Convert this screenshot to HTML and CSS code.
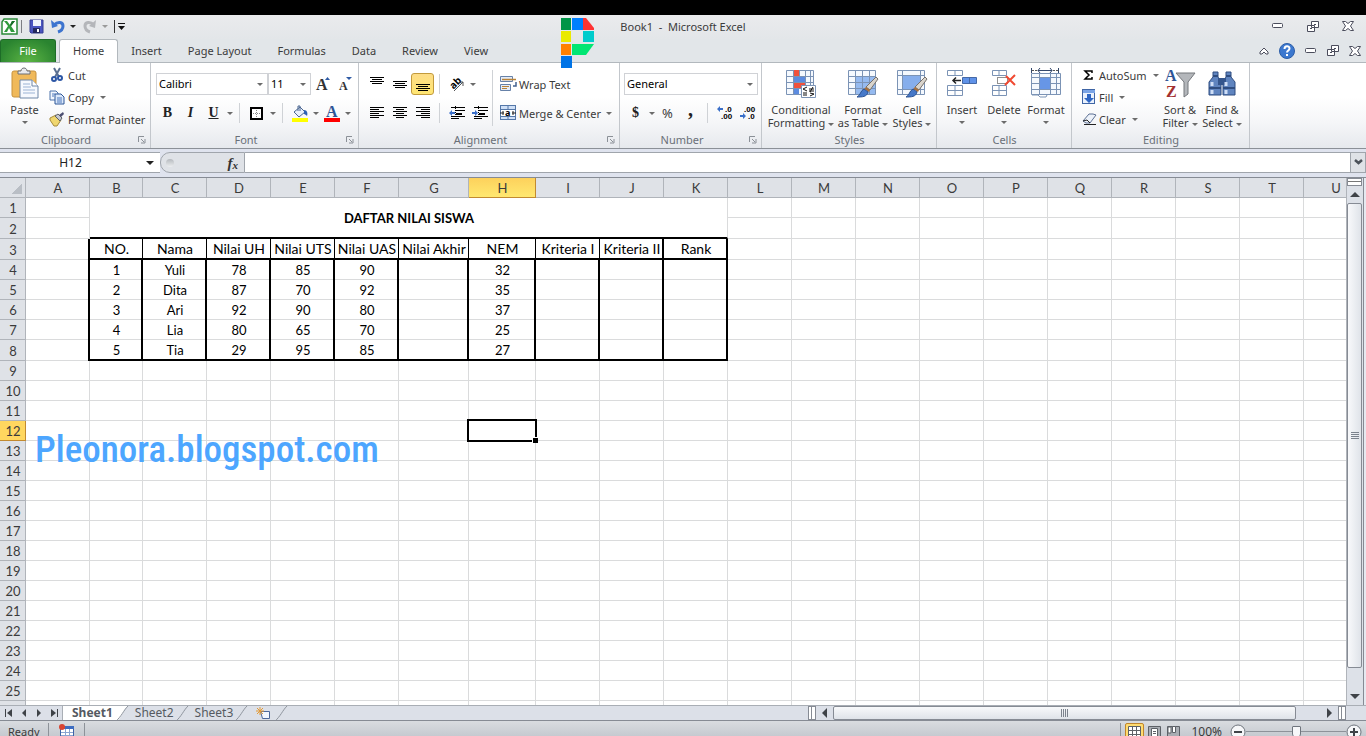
FILE: index.html
```html
<!DOCTYPE html>
<html lang="en">
<head>
    <meta charset="UTF-8">
    <meta name="viewport" content="width=device-width, initial-scale=1.0">
    <title>Book1 - Microsoft Excel</title>
    <link rel="stylesheet" href="styles.css">
</head>
<body>
    <div class="app">
        <header class="titlebar">
            <div class="quick">
                <svg width="17" height="17" viewBox="0 0 17 17"><path d="M3 1h13v15H1V4z" fill="#fff" stroke="#2b8a3a" stroke-width="1.5"/><path d="M3 3h3l3 4 2-4h3l-4 5 4 6h-4l-2-4-2 4H3l4-6z" fill="#2f9a3c"/><path d="M9 7l2-4h3l-4 5z" fill="#176b28"/></svg>
                <span class="bar"></span>
                <button class="qbtn" aria-label="Save"><svg width="15" height="15" viewBox="0 0 15 15"><path d="M1 1h13v13H2l-1-1z" fill="#4a55c0" stroke="#343c93"/><path d="M4 1h8v6H4z" fill="#eef2fb"/><path d="M4 9h7v5H4z" fill="#23295f"/><path d="M8 10h2v3H8z" fill="#fff"/></svg></button>
                <button class="qbtn" aria-label="Undo"><svg width="14" height="15" viewBox="0 0 14 15"><path d="M3 6c4-4 9-3 9 1 0 3-2 5-5 6" fill="none" stroke="#3d74cf" stroke-width="3"/><path d="M0 1l1 8 6-2z" fill="#3d74cf"/></svg></button>
                <span class="caret black"></span>
                <button class="qbtn" aria-label="Redo"><svg width="14" height="15" viewBox="0 0 14 15"><path d="M11 6C7 2 2 3 2 7c0 3 2 5 5 6" fill="none" stroke="#b4b6ba" stroke-width="3"/><path d="M13 1l-1 8-6-2z" fill="#b4b6ba"/></svg></button>
                <span class="caret pale"></span>
                <span class="bar dark"></span>
                <button class="qbtn custom" aria-label="Customize"><svg width="7" height="7" viewBox="0 0 7 7"><path d="M0 0h7v1H0zM0 3h7L3.500 7z" fill="#111"/></svg></button>
            </div>
            <h1>Book1 &nbsp;-&nbsp; Microsoft Excel</h1>
            <div class="winctl top">
                <button aria-label="Minimize"><svg width="12" height="6"><rect x=".5" y=".5" width="10" height="4" rx="1" fill="#fff" stroke="#4b4d5c"/></svg></button>
                <button aria-label="Restore"><svg width="12" height="11"><path d="M4.500.5h7v6h-7zM.5 4.500h7v6h-7z" fill="#fff" stroke="#4b4d5c"/><path d="M3 7h2v1H3zM7 3h2v1H7z" fill="#4b4d5c"/></svg></button>
                <button aria-label="Close"><svg width="12" height="10"><path d="M.5.5h3l2.500 2 2.500-2h3L8.500 5l3 4.500h-3L6 7.500l-2.500 2h-3l3-4.500z" fill="#fff" stroke="#4b4d5c"/></svg></button>
            </div>
            <svg class="logo" width="34" height="51" viewBox="0 0 34 51"><path d="M0 0h10v12H0z" fill="#009548"/><path d="M11 0h11v12H11z" fill="#0080ff"/><path d="M22 0h3l8 10v2H22z" fill="#ff3333"/><path d="M0 13h10v11H0z" fill="#eaea00"/><path d="M22 13h11v11H22z" fill="#00cccc"/><path d="M0 26h10v11H0z" fill="#ff8000"/><path d="M11 26h22l-8 11H11z" fill="#00e673"/><path d="M0 38h11v12H0z" fill="#0073e6"/></svg>
        </header>

        <nav class="tabs">
            <a href="#" class="file">File</a>
            <a href="#" class="active">Home</a>
            <a href="#">Insert</a>
            <a href="#">Page Layout</a>
            <a href="#">Formulas</a>
            <a href="#">Data</a>
            <a href="#">Review</a>
            <a href="#">View</a>
            <div class="winctl">
                <button aria-label="Collapse ribbon"><svg width="10" height="8"><path d="M5 1l4 4v2H7L5 5 3 7H1V5z" fill="#fff" stroke="#4b4d5c"/></svg></button>
                <button aria-label="Help"><svg width="16" height="16"><circle cx="8" cy="8" r="7.500" fill="#3c78cf" stroke="#2c5ea8"/><path d="M5.500 6c0-3.500 5-3.500 5-.5C10.500 7.500 8 7.500 8 9.500M8 11v2" fill="none" stroke="#fff" stroke-width="2"/></svg></button>
                <button aria-label="Minimize window"><svg width="12" height="6"><rect x=".5" y=".5" width="10" height="4" rx="1" fill="#fff" stroke="#4b4d5c"/></svg></button>
                <button aria-label="Restore window"><svg width="12" height="11"><path d="M4.500.5h7v6h-7zM.5 4.500h7v6h-7z" fill="#fff" stroke="#4b4d5c"/><path d="M3 7h2v1H3zM7 3h2v1H7z" fill="#4b4d5c"/></svg></button>
                <button aria-label="Close window"><svg width="12" height="10"><path d="M.5.5h3l2.500 2 2.500-2h3L8.500 5l3 4.500h-3L6 7.500l-2.500 2h-3l3-4.500z" fill="#fff" stroke="#4b4d5c"/></svg></button>
            </div>
        </nav>

        <section class="ribbon">
            <div class="group clipboard">
                <div class="content">
                    <button class="big">
                        <svg width="28" height="32" viewBox="0 0 28 32"><rect x="1" y="4" width="24" height="26" rx="2" fill="#f0b95a" stroke="#c8923c"/><path d="M7 7V4h3c0-4 6-4 6 0h3v3z" fill="#e8e9ec" stroke="#6c6f75"/><path d="M9 13h12l6 6v12H9z" fill="#f6f9fe" stroke="#6e87a8"/><path d="M21 13v6h6" fill="#fff" stroke="#6e87a8"/><path d="M12 17h7M12 20h8M12 23h12M12 26h12" stroke="#9bb3d4"/></svg>
                        <span>Paste</span><span class="caret"></span>
                    </button>
                    <div class="stack">
                        <button><svg width="16" height="16" viewBox="0 0 16 16"><path d="M5 1l5 9M11 1L6 10" stroke="#5a6f91" stroke-width="2"/><circle cx="5" cy="12" r="2" fill="none" stroke="#2c56a5" stroke-width="2"/><circle cx="11" cy="11" r="2" fill="none" stroke="#2c56a5" stroke-width="2"/></svg>Cut</button>
                        <button><svg width="16" height="16" viewBox="0 0 16 16"><path d="M1 2h6l2 2v7H1z" fill="#f2f6fd" stroke="#4d72ab"/><path d="M6 5h6l3 3v7H6z" fill="#dce8fa" stroke="#2d5697"/><path d="M3 5h3M3 7h2M8 9h5M8 11h5M8 13h5" stroke="#4d79bd"/></svg>Copy<span class="caret"></span></button>
                        <button><svg width="16" height="16" viewBox="0 0 16 16"><path d="M1 7l6-3 5 5-4 6H5L1 9z" fill="#efd66f" stroke="#a48a3c"/><path d="M6 5l3-2 4 4-2 3z" fill="#c4c8d0" stroke="#5d6066"/><path d="M10 4l4-3 1 2-3 3z" fill="#4c4f72"/></svg>Format Painter</button>
                    </div>
                </div>
                <div class="label"><span>Clipboard</span><svg class="launch" width="8" height="8"><path d="M.5 6V.5H6M3 3l3 3M7 3v4H3" fill="none" stroke="#8b9097"/></svg></div>
            </div>

            <div class="group font">
                <div class="content rows">
                    <div class="row">
                        <span class="combo face"><select aria-label="Font"><option>Calibri</option></select></span>
                        <span class="combo size"><select aria-label="Font size"><option>11</option></select></span>
                        <button class="tool" aria-label="Grow font"><svg width="16" height="16"><text x="1" y="14" class="serif" font-size="16">A</text><path d="M10 4l2.500-3L15 4z" fill="#2f5ba5"/></svg></button>
                        <button class="tool" aria-label="Shrink font"><svg width="14" height="16"><text x="0" y="14" class="serif" font-size="12">A</text><path d="M7 1h6l-3 3z" fill="#2f5ba5"/></svg></button>
                    </div>
                    <div class="row">
                        <button class="tool letter">B</button>
                        <button class="tool letter italic">I</button>
                        <button class="tool letter under">U</button>
                        <span class="drop"><i class="caret"></i></span>
                        <span class="sep"></span>
                        <button class="tool" aria-label="Borders"><svg width="13" height="13"><rect x="1" y="1" width="11" height="11" fill="#fff" stroke="#000" stroke-width="2"/><path d="M6.500 3v8M3 6.500h8" stroke="#888" stroke-dasharray="1 1"/></svg></button>
                        <span class="drop"><i class="caret"></i></span>
                        <span class="sep"></span>
                        <button class="tool" aria-label="Fill color"><svg width="16" height="17"><path d="M2 7l6-5 5 5-6 5z" fill="#e8effa" stroke="#4b6691"/><path d="M6 6V1h2v5" fill="none" stroke="#4b6691"/><path d="M12 5c3 0 4 3 3 6-1-1-2-2-3-2z" fill="#2e61b4"/><path d="M0 13h16v4H0z" fill="#ff0"/></svg></button>
                        <span class="drop"><i class="caret"></i></span>
                        <button class="tool" aria-label="Font color"><svg width="16" height="17"><text x="2" y="12" class="serif blue" font-size="16">A</text><path d="M0 13h16v4H0z" fill="#f00"/></svg></button>
                        <span class="drop"><i class="caret"></i></span>
                    </div>
                </div>
                <div class="label"><span>Font</span><svg class="launch" width="8" height="8"><path d="M.5 6V.5H6M3 3l3 3M7 3v4H3" fill="none" stroke="#8b9097"/></svg></div>
            </div>

            <div class="group align">
                <div class="content">
                    <div class="rows">
                        <div class="row">
                            <button class="tool" aria-label="Top align"><svg width="14" height="14"><path d="M0 .5h14M2 2.500h10M0 4.500h14M2 6.500h10" stroke="#000"/></svg></button>
                            <button class="tool" aria-label="Middle align"><svg width="14" height="14"><path d="M0 4.500h14M2 6.500h10M0 8.500h14M2 10.500h10" stroke="#000"/></svg></button>
                            <button class="tool on" aria-label="Bottom align"><svg width="14" height="14"><path d="M0 7.500h14M2 9.500h10M0 11.500h14M2 13.500h10" stroke="#000"/></svg></button>
                            <span class="sep"></span>
                            <button class="tool" aria-label="Orientation"><svg width="16" height="16"><text x="1" y="11" font-size="10" font-weight="bold" transform="rotate(-45 6 8)">ab</text><path d="M5 15l9-9M14 10V6h-4" fill="none" stroke="#555"/></svg></button>
                            <span class="drop"><i class="caret"></i></span>
                        </div>
                        <div class="row">
                            <button class="tool" aria-label="Align left"><svg width="14" height="12"><path d="M0 .5h14M0 2.500h9M0 4.500h14M0 6.500h9M0 8.500h14M0 10.500h9" stroke="#000"/></svg></button>
                            <button class="tool" aria-label="Center"><svg width="14" height="12"><path d="M0 .5h14M3 2.500h8M0 4.500h14M3 6.500h8M0 8.500h14M3 10.500h8" stroke="#000"/></svg></button>
                            <button class="tool" aria-label="Align right"><svg width="14" height="12"><path d="M0 .5h14M5 2.500h9M0 4.500h14M5 6.500h9M0 8.500h14M5 10.500h9" stroke="#000"/></svg></button>
                            <span class="sep"></span>
                            <button class="tool" aria-label="Decrease indent"><svg width="16" height="14"><path d="M2 1.500h14M7 4.500h9M7 7.500h6M2 10.500h14M2 12.500h8" stroke="#000"/><path d="M7 4h8v1H7zM7 7h6v2H7z"/><path d="M6.500 0v14" stroke="#000" stroke-dasharray="1 1"/><path d="M0 7l3-3v2h3v2H3v2z" fill="#3a6fc9"/></svg></button>
                            <button class="tool" aria-label="Increase indent"><svg width="16" height="14"><path d="M2 1.500h14M7 4.500h9M7 7.500h6M2 10.500h14M2 12.500h8" stroke="#000"/><path d="M7 4h8v1H7zM7 7h6v2H7z"/><path d="M6.500 0v14" stroke="#000" stroke-dasharray="1 1"/><path d="M6 7L3 4v2H0v2h3v2z" fill="#3a6fc9"/></svg></button>
                        </div>
                    </div>
                    <span class="sep tall"></span>
                    <div class="rows">
                        <button class="text"><svg width="17" height="16"><path d="M.5.500h12v5H.5zM.5 8.500h10v6H.5z" fill="#e4ecf8" stroke="#6681a8"/><path d="M2 3.500h14" stroke="#b98338" stroke-width="1.500"/><path d="M2 10.500h7M2 12.500h5" stroke="#b98338"/><path d="M16 6v4h-3" fill="none" stroke="#44618f" stroke-width="1.500"/></svg>Wrap Text</button>
                        <button class="text"><svg width="17" height="16"><rect x=".5" y=".5" width="15" height="14" fill="#cfe0f7" stroke="#5477a8"/><path d="M1 4.500h14M1 11.500h14M8 1v3M8 12v3" stroke="#5477a8"/><path d="M1 5h14v6H1z" fill="#fff"/><path d="M0 8h4M12 8h4M3 6v4M13 6v4" stroke="#222"/><text x="5" y="11" font-size="9" font-weight="bold">a</text></svg>Merge &amp; Center<span class="caret"></span></button>
                    </div>
                </div>
                <div class="label"><span>Alignment</span><svg class="launch" width="8" height="8"><path d="M.5 6V.5H6M3 3l3 3M7 3v4H3" fill="none" stroke="#8b9097"/></svg></div>
            </div>

            <div class="group number">
                <div class="content rows">
                    <div class="row">
                        <span class="combo format"><select aria-label="Number format"><option>General</option></select></span>
                    </div>
                    <div class="row">
                        <button class="tool letter">$</button>
                        <span class="drop"><i class="caret"></i></span>
                        <button class="tool percent">%</button>
                        <button class="tool letter comma">,</button>
                        <span class="sep"></span>
                        <button class="tool" aria-label="Increase decimal"><svg width="16" height="14"><text x="8" y="6" class="dec">.0</text><text x="4" y="13" class="dec">.00</text><path d="M0 3l3-3v2h3v2H3v2z" fill="#3a6fc9"/></svg></button>
                        <button class="tool" aria-label="Decrease decimal"><svg width="16" height="14"><text x="4" y="6" class="dec">.00</text><text x="8" y="13" class="dec">.0</text><path d="M6 10L3 7v2H0v2h3v2z" fill="#3a6fc9"/></svg></button>
                    </div>
                </div>
                <div class="label"><span>Number</span><svg class="launch" width="8" height="8"><path d="M.5 6V.5H6M3 3l3 3M7 3v4H3" fill="none" stroke="#8b9097"/></svg></div>
            </div>

            <div class="group style">
                <div class="content">
                    <button class="big">
                        <svg width="32" height="32" viewBox="0 0 32 32"><path d="M1.500 3.500h27v24h-27z" fill="#f5f9fe" stroke="#7b93b5"/><path d="M8 3h6v24H8z" fill="#f0513c"/><path d="M8 9h12v6H8zM8 21h6v6H8z" fill="#5b8be0"/><path d="M8 15h12v6H8z" fill="#f0513c"/><path d="M1 9.500h27M1 15.500h27M1 21.500h27M8.500 3v24M14.500 3v6M20.500 3v24M25.500 3v24" stroke="#7b93b5"/><path d="M16.500 18.500h14v12h-14z" fill="#fff" stroke="#7b93b5"/><path d="M22 20l-4 2 4 2M18 26h4M18 28h4M24 22h5M24 24h5M28 20l-3 5M25 26l4 1-4 2" fill="none" stroke="#111"/></svg>
                        <span>Conditional</span><span>Formatting<i class="caret"></i></span>
                    </button>
                    <button class="big">
                        <svg width="32" height="32" viewBox="0 0 32 32"><path d="M1.500 3.500h27v24h-27z" fill="#f5f9fe" stroke="#7b93b5"/><path d="M8 9h20v18H8z" fill="#95baf0"/><path d="M1 9.500h27M1 15.500h27M1 21.500h27M8.500 3v24M15.500 3v24M22.500 3v24" stroke="#7b93b5"/><path d="M29 10l2 2-8 11-4-3z" fill="#d9d4cc" stroke="#76706a"/><path d="M19 20l4 3-1 2-5-3z" fill="#a8703c"/><path d="M17 22l4 3c-1 5-6 5-11 5 4-2 3-6 7-8z" fill="#4678c8" stroke="#2e5493"/></svg>
                        <span>Format</span><span>as Table<i class="caret"></i></span>
                    </button>
                    <button class="big">
                        <svg width="32" height="32" viewBox="0 0 32 32"><path d="M1.500 3.500h27v24h-27z" fill="#f5f9fe" stroke="#7b93b5"/><path d="M1 8.500h27M1 22.500h27M6.500 3v24M24.500 3v24" stroke="#7b93b5"/><path d="M7 9h17v13H7z" fill="#86aeec"/><path d="M29 10l2 2-8 11-4-3z" fill="#d9d4cc" stroke="#76706a"/><path d="M19 20l4 3-1 2-5-3z" fill="#a8703c"/><path d="M17 22l4 3c-1 5-6 5-11 5 4-2 3-6 7-8z" fill="#4678c8" stroke="#2e5493"/></svg>
                        <span>Cell</span><span>Styles<i class="caret"></i></span>
                    </button>
                </div>
                <div class="label"><span>Styles</span></div>
            </div>

            <div class="group cells">
                <div class="content">
                    <button class="big">
                        <svg width="32" height="32" viewBox="0 0 32 32"><path d="M1.500 3.500h15v5h-15zM9 3v5M1.500 18.500h15v10h-15zM1 23.500h15M9 18v10" fill="#fff" stroke="#7b93b5"/><path d="M16.500 10.500h14v6h-14z" fill="#5f92e8" stroke="#4569a6"/><path d="M23.500 11v5" stroke="#4569a6"/><path d="M7 13.500h8M10 10.500l-3 3 3 3" fill="none" stroke="#222" stroke-width="1.500"/></svg>
                        <span>Insert</span><span class="caret"></span>
                    </button>
                    <button class="big">
                        <svg width="32" height="32" viewBox="0 0 32 32"><path d="M4.500 3.500h14v5h-14zM11 3v5M4.500 18.500h14v10h-14zM4 23.500h14M11 18v10" fill="#fff" stroke="#7b93b5"/><path d="M9.500 10.500h10v6h-10z" fill="none" stroke="#222" stroke-dasharray="1 1"/><path d="M18 9l9 9M27 8L17 18" stroke="#f04a32" stroke-width="2"/></svg>
                        <span>Delete</span><span class="caret"></span>
                    </button>
                    <button class="big">
                        <svg width="32" height="32" viewBox="0 0 32 32"><path d="M1.500 6.500h29v21h-29z" fill="#f5f9fe" stroke="#7b93b5"/><path d="M2 28h6l2 2h6l1-2" fill="#fff" stroke="#7b93b5"/><path d="M10 11h10v11H10z" fill="#6796e6"/><path d="M1 10.500h29M1 16.500h9M20 16.500h10M1 22.500h29M9.500 6v21M20.500 6v21M26.500 6v21" stroke="#7b93b5"/><path d="M2 3.500h26" stroke="#555" stroke-dasharray="2 1"/><path d="M1.500 1v5M28.500 1v5M8 3.500h14M10 1L8 3.500 10 6M20 1l2 2.500L20 6" fill="none" stroke="#34486b"/></svg>
                        <span>Format</span><span class="caret"></span>
                    </button>
                </div>
                <div class="label"><span>Cells</span></div>
            </div>

            <div class="group editing">
                <div class="content">
                    <div class="stack">
                        <button><svg width="14" height="14" viewBox="0 0 14 14"><path d="M10 5V3H3l4 4-4 4h7V9" fill="none" stroke="#000" stroke-width="1.500"/></svg>AutoSum<span class="caret"></span></button>
                        <button><svg width="14" height="16" viewBox="0 0 14 16"><rect x=".5" y=".5" width="12" height="14" fill="#e9f1fd" stroke="#3f65a5"/><path d="M1 1h12v3H1z" fill="#7aa4e6"/><path d="M5 5h4v4h3l-5 5-5-5h3z" fill="#2e66c4"/></svg>Fill<span class="caret"></span></button>
                        <button><svg width="14" height="14" viewBox="0 0 14 14"><path d="M1 9l6-7h4l3 1-6 8H4z" fill="#edf2fa" stroke="#5d7194"/><path d="M1 9l4-1 3 3M2 12.500h12" fill="none" stroke="#222"/></svg>Clear<span class="caret"></span></button>
                    </div>
                    <button class="big">
                        <svg width="32" height="32" viewBox="0 0 32 32"><path d="M12 6h19l-7 9v12l-4 3V15z" fill="#b4b7bb" stroke="#75787d"/><text x="1" y="14" class="serif blue" font-size="16">A</text><text x="2" y="30" class="serif red" font-size="16">Z</text></svg>
                        <span>Sort &amp;</span><span>Filter<i class="caret"></i></span>
                    </button>
                    <button class="big">
                        <svg width="32" height="32" viewBox="0 0 32 32"><path d="M7 5h5v5l3 5v13H3V15l4-5zM20 5h5v5l4 5v13H17V15l3-5z" fill="#5f84bf" stroke="#2f4d80"/><path d="M12 11h8v7h-8z" fill="#34558c"/><path d="M3 21h12M17 21h12M7 9h5M20 9h5" stroke="#2f4d80" stroke-width="2"/><path d="M6 15v4M20 15v4M6 23v4M20 23v4" stroke="#cfdef6" stroke-width="3"/></svg>
                        <span>Find &amp;</span><span>Select<i class="caret"></i></span>
                    </button>
                </div>
                <div class="label"><span>Editing</span></div>
            </div>
        </section>

        <div class="formula">
            <div class="namebox"><input type="text" aria-label="Name box" value="H12"><span class="caret black"></span></div>
            <div class="fx"><span class="knob"></span><button><i>f</i><small>x</small></button></div>
            <input type="text" class="entry" aria-label="Formula">
            <button class="expand" aria-label="Expand formula bar"><svg width="9" height="7"><path d="M1 1l3.500 3L8 1" fill="none" stroke="#4c525a" stroke-width="2.500"/></svg></button>
        </div>

        <main class="sheet">
            <div class="viewport" id="viewport">
                <table id="grid"></table>
                <div class="watermark">Pleonora.blogspot.com</div>
            </div>
            <div class="vscroll">
                <span class="split"></span>
                <button aria-label="Scroll up"><svg width="10" height="6"><path d="M0 5l5-5 5 5z" fill="#3f4348"/></svg></button>
                <span class="thumb"><svg width="8" height="7"><path d="M0 .5h8M0 2.500h8M0 4.500h8M0 6.500h8" stroke="#7c838d"/></svg></span>
                <button aria-label="Scroll down"><svg width="10" height="6"><path d="M0 0h10L5 5z" fill="#3f4348"/></svg></button>
            </div>
        </main>

        <div class="sheetbar">
            <div class="nav">
                <button aria-label="First sheet"><svg width="8" height="8"><path d="M0 0h1v8H0zM7 0v8L2 4z" fill="#3f4348"/></svg></button>
                <button aria-label="Previous sheet"><svg width="8" height="8"><path d="M6 0v8L2 4z" fill="#3f4348"/></svg></button>
                <button aria-label="Next sheet"><svg width="8" height="8"><path d="M2 0v8l4-4z" fill="#3f4348"/></svg></button>
                <button aria-label="Last sheet"><svg width="8" height="8"><path d="M7 0h1v8H7zM1 0v8l5-4z" fill="#3f4348"/></svg></button>
            </div>
            <button class="stab current">Sheet1</button><svg class="edge" width="15" height="16"><path d="M0 0h14C9 2 8 15 0 16z" fill="#fff"/><path d="M14 0C9 5 8 10 1 16" fill="none" stroke="#8e949d"/></svg>
            <button class="stab">Sheet2</button><svg class="edge" width="15" height="16"><path d="M14 0C9 5 8 10 1 16" fill="none" stroke="#8e949d"/></svg>
            <button class="stab">Sheet3</button><svg class="edge" width="15" height="16"><path d="M14 0C9 5 8 10 1 16" fill="none" stroke="#8e949d"/></svg>
            <button class="stab new" aria-label="Insert sheet"><svg width="15" height="13"><path d="M4.500 4.500h9v7h-7z" fill="#f1f6fe" stroke="#4c689b"/><path d="M4 0v8M0 4h8M1 1l6 6M7 1L1 7" stroke="#e39a35"/></svg></button><svg class="edge" width="15" height="16"><path d="M14 0C9 5 8 10 1 16" fill="none" stroke="#8e949d"/></svg>
            <div class="hscroll">
                <span class="grip"></span>
                <button aria-label="Scroll left"><svg width="6" height="10"><path d="M5 0v10L0 5z" fill="#3f4348"/></svg></button>
                <span class="track"><span class="thumb"><svg width="7" height="8"><path d="M.5 0v8M2.500 0v8M4.500 0v8M6.500 0v8" stroke="#7c838d"/></svg></span></span>
                <button aria-label="Scroll right"><svg width="6" height="10"><path d="M0 0v10l5-5z" fill="#3f4348"/></svg></button>
                <span class="grip"></span>
            </div>
        </div>

        <footer class="status">
            <span class="ready">Ready</span>
            <span class="div"></span>
            <button class="macro" aria-label="Record macro"><svg width="16" height="16"><path d="M1.500 2.500h13v12h-13z" fill="#fff" stroke="#3d63a8"/><path d="M2 2h13v3H2z" fill="#3d6cc0"/><path d="M2 8.500h12M2 11.500h12M6.500 5v9M10.500 5v9" stroke="#8aa5d1"/><circle cx="3" cy="3" r="3" fill="#d84432"/></svg></button>
            <span class="div"></span>
            <div class="right">
                <span class="div"></span>
                <button class="view on" aria-label="Normal view"><svg width="13" height="12"><path d="M.5.500h12v11H.5zM0 4.500h13M0 8.500h13M4.500 0v12M8.500 0v12" fill="#fff" stroke="#5d6167"/></svg></button>
                <button class="view" aria-label="Page layout view"><svg width="13" height="12"><path d="M.5.500h12v11H.5z" fill="#a9adb3" stroke="#5d6167"/><path d="M3.500 2.500h6v8h-6zM5 5.500h3M5 7.500h3" fill="#fff" stroke="#5d6167"/></svg></button>
                <button class="view" aria-label="Page break view"><svg width="13" height="12"><path d="M.5.500h12v11H.5z" fill="#a9adb3" stroke="#5d6167"/><path d="M1 1h3v6H1zM5.500.500h3v6h-3z" fill="#fff" stroke="#5d6167"/></svg></button>
                <span class="pct">100%</span>
                <button class="zoom" aria-label="Zoom out"><svg width="16" height="16"><circle cx="8" cy="8" r="7" fill="#f6f7f9" stroke="#6f757d"/><path d="M4 8h8" stroke="#3f4348" stroke-width="2"/></svg></button>
                <input type="range" aria-label="Zoom" min="0" max="100" value="50">
                <button class="zoom" aria-label="Zoom in"><svg width="16" height="16"><circle cx="8" cy="8" r="7" fill="#f6f7f9" stroke="#6f757d"/><path d="M4 8h8M8 4v8" stroke="#3f4348" stroke-width="2"/></svg></button>
            </div>
        </footer>
    </div>

    <script>
        const alphabet = 'ABCDEFGHIJKLMNOPQRSTUVWXYZ'.split('');
        const colWidths = { B: 53, G: 70, H: 67 };
        // Table data, columns B to K
        const data = {
            3: ['NO.', 'Nama', 'Nilai UH', 'Nilai UTS', 'Nilai UAS', 'Nilai Akhir', 'NEM', 'Kriteria I', 'Kriteria II', 'Rank'],
            4: ['1', 'Yuli', '78', '85', '90', '', '32', '', '', ''],
            5: ['2', 'Dita', '87', '70', '92', '', '35', '', '', ''],
            6: ['3', 'Ari', '92', '90', '80', '', '37', '', '', ''],
            7: ['4', 'Lia', '80', '65', '70', '', '25', '', '', ''],
            8: ['5', 'Tia', '29', '95', '85', '', '27', '', '', '']
        };
        const activeCol = 'H';
        const activeRow = 12;
        const viewport = document.getElementById('viewport');
        const grid = document.getElementById('grid');

        function drawGrid() {
            // Only draw the columns and rows that fit in the window
            const letters = [];
            let total = 26;
            alphabet.forEach((l) => {
                if (total < viewport.clientWidth || letters.length < 11) {
                    letters.push(l);
                    total += colWidths[l] || 64;
                }
            });
            const lastRow = Math.max(12, Math.floor((viewport.clientHeight - 23) / 20));

            let html = '<colgroup><col style="width: 26px">';
            letters.forEach((l) => { html += `<col style="width: ${colWidths[l] || 64}px">`; });
            html += '</colgroup><thead><tr><th class="corner"></th>';
            letters.forEach((l) => {
                html += `<th scope="col" class="${l === activeCol ? 'hot' : ''}">${l}</th>`;
            });
            html += '</tr></thead><tbody>';

            for (let r = 1; r <= lastRow + 1; r++) {
                const tall = [2, 3, 8].includes(r) ? 'tall' : '';
                const number = r <= lastRow ? r : '';
                html += `<tr class="${tall}"><th scope="row" class="${r === activeRow ? 'hot' : ''}">${number}</th>`;
                letters.forEach((l, c) => {
                    const inside = c >= 1 && c <= 10;
                    if (inside && r <= 2) {
                        // Title is merged over B1:K2
                        if (r === 1 && c === 1) html += '<td class="title" colspan="10" rowspan="2">DAFTAR NILAI SISWA</td>';
                        return;
                    }
                    const cls = [];
                    if (data[r]) {
                        if (c === 0 || (c <= 10 && r > 3) || c === 9 || c === 10) cls.push('thick-r');
                        else if (inside) cls.push('thin-r');
                        if (inside && (r === 3 || r === 8)) cls.push('thick-b');
                        if (inside && r === 3) cls.push('heading');
                    }
                    if (l === activeCol && r === activeRow) cls.push('selected');
                    html += `<td class="${cls.join(' ')}">${data[r] && inside ? data[r][c - 1] : ''}</td>`;
                });
                html += '</tr>';
            }
            grid.style.width = total + 'px';
            grid.innerHTML = html + '</tbody>';
        }

        drawGrid();
        window.addEventListener('resize', drawGrid);
    </script>
</body>
</html>
```
FILE: styles.css
```css
* {
    box-sizing: border-box;
}

body {
    margin: 0;
    height: 100vh;
    overflow: hidden;
    background: #000;
    font-family: "Noto Sans", "Open Sans", sans-serif;
    font-size: 11px;
    color: #3b3b3b;
}

button, input, select {
    font: inherit;
    color: inherit;
    border: 0;
    margin: 0;
    padding: 0;
    background: none;
}

button {
    display: flex;
    align-items: center;
    justify-content: center;
    white-space: nowrap;
}

svg {
    display: block;
    flex: none;
    overflow: visible;
}

.app {
    display: flex;
    flex-direction: column;
    height: calc(100vh + 7px);
    padding-top: 15px;
}

.caret {
    display: inline-block;
    flex: none;
    border: 3px solid transparent;
    border-top-color: #6b6b6b;
    border-bottom-width: 0;
}

.caret.black {
    border-top-color: #222;
}

.caret.pale {
    border-top-color: #9a9a9a;
}

/* title bar */
.titlebar {
    position: relative;
    display: flex;
    align-items: center;
    justify-content: space-between;
    height: 24px;
    flex: none;
    padding-bottom: 2px;
    background: linear-gradient(#eaebed, #e3e6e9);
}

.titlebar h1 {
    margin: 0;
    font-size: 11px;
    font-weight: normal;
}

.quick, .titlebar .winctl {
    display: flex;
    align-items: center;
    width: 300px;
}

.quick {
    gap: 7px;
    padding-left: 1px;
}

.quick .caret {
    margin-left: -2px;
}

.bar {
    width: 1px;
    height: 13px;
    margin-left: -4px;
    background: #7c7e83;
}

.bar.dark {
    margin-left: -1px;
    background: #333;
}

.custom {
    margin-left: -4px;
}

.winctl {
    display: flex;
    align-items: center;
    justify-content: flex-end;
    gap: 10px;
    margin-left: auto;
    padding-right: 5px;
}

.titlebar .winctl {
    margin-left: 0;
    gap: 23px;
    padding-right: 12px;
}

.logo {
    position: absolute;
    top: 3px;
    left: 561px;
}

/* ribbon tabs */
.tabs {
    display: flex;
    height: 24px;
    flex: none;
    background: #e2e6e9;
    border-bottom: 1px solid #b2b8bd;
}

.tabs a {
    display: flex;
    align-items: center;
    height: 24px;
    padding: 0 13px 2px;
    color: #3b3b3b;
    text-decoration: none;
}

.tabs .file {
    width: 56px;
    justify-content: center;
    margin-right: 3px;
    height: 23px;
    color: #fff;
    border: 1px solid #1d6c27;
    border-bottom: 0;
    border-radius: 3px 3px 0 0;
    background: radial-gradient(ellipse at bottom, #5cb544, #2a8430 80%);
}

.tabs .active {
    background: #fff;
    border: 1px solid #b2b8bd;
    border-bottom: 0;
    border-radius: 3px 3px 0 0;
}

/* ribbon */
.ribbon {
    display: flex;
    height: 86px;
    flex: none;
    background: linear-gradient(#fff 40%, #f5f6f8 70%, #e6e9ed);
    border-bottom: 1px solid #8b9097;
}

.group {
    display: flex;
    flex-direction: column;
    flex: none;
    margin-right: 1px;
    border-right: 1px solid #c3c7cc;
}

.clipboard { width: 151px; }
.font { width: 207px; }
.align { width: 260px; }
.number { width: 141px; }
.style { width: 174px; }
.cells { width: 134px; }
.editing { width: 177px; }

.content {
    display: flex;
    flex: 1;
}

.rows {
    display: flex;
    flex-direction: column;
    gap: 7px;
    padding-top: 10px;
}

.content.rows {
    padding-left: 3px;
}

.font .rows {
    padding-left: 4px;
}

.align .content {
    padding-left: 5px;
}

.row {
    display: flex;
    align-items: center;
    height: 22px;
}

.label {
    position: relative;
    height: 17px;
    line-height: 17px;
    text-align: center;
    color: #6a7078;
    padding-right: 18px;
}

.style .label, .cells .label, .editing .label {
    padding-right: 0;
}

.launch {
    position: absolute;
    right: 4px;
    top: 5px;
}

.stack {
    display: flex;
    flex-direction: column;
    padding-top: 1px;
}

.stack button {
    justify-content: flex-start;
    height: 22px;
    gap: 3px;
}

.big {
    flex-direction: column;
    justify-content: flex-start;
    padding-top: 4px;
    line-height: 13px;
}

.big svg {
    margin-bottom: 4px;
}

.big > .caret {
    margin-top: 5px;
}

.big i.caret, .stack .caret, .text .caret {
    margin-left: 3px;
    vertical-align: middle;
}

.clipboard .big {
    width: 49px;
}

.style .content {
    padding-left: 2px;
}

.style .big {
    width: 52px;
}

.style .big:first-child {
    width: 72px;
}

.style .big:last-child {
    width: 46px;
}

.cells .content {
    padding-left: 3px;
}

.cells .big {
    width: 42px;
}

.editing .stack {
    width: 77px;
    padding-left: 9px;
    margin-right: 9px;
}

.editing .big {
    width: 42px;
}

.tool {
    width: 23px;
    height: 22px;
}

.tool.on {
    border: 1px solid #c29a3b;
    border-radius: 3px;
    background: linear-gradient(#fddc86, #ffe673);
}

.letter {
    font-family: "Liberation Serif", serif;
    font-weight: bold;
    font-size: 14px;
    color: #222;
}

.italic {
    font-style: italic;
}

.under {
    text-decoration: underline;
}

.comma {
    font-size: 20px;
    line-height: 10px;
    padding-bottom: 8px;
}

.percent {
    font-size: 13px;
}

.drop {
    display: flex;
    justify-content: center;
    width: 9px;
}

.sep {
    width: 1px;
    height: 20px;
    margin: 0 5px;
    background: #cfd2d6;
}

.sep.tall {
    height: 56px;
    margin: 7px 7px 0 1px;
}

.text {
    justify-content: flex-start;
    height: 22px;
    gap: 2px;
}

.serif {
    font-family: "Liberation Serif", serif;
    font-weight: bold;
    fill: #333;
}

.blue {
    fill: #2f5596;
}

.red {
    fill: #a33030;
}

.dec {
    font-family: "Liberation Sans", sans-serif;
    font-size: 8px;
    font-weight: bold;
}

.combo {
    position: relative;
    height: 22px;
    border: 1px solid #d0d2d6;
    background: #fff;
}

.combo select {
    appearance: none;
    display: block;
    width: 100%;
    height: 20px;
    padding: 0 0 1px 2px;
    color: #000;
}

.combo::after {
    content: "";
    position: absolute;
    right: 4px;
    top: 9px;
    border: 3px solid transparent;
    border-top-color: #6b6b6b;
    border-bottom-width: 0;
}

.face { width: 112px; }
.size { width: 43px; }
.format { width: 134px; }

/* formula bar */
.formula {
    display: flex;
    height: 29px;
    flex: none;
    padding: 3px 0 4px;
    border-bottom: 1px solid #868b94;
    background: #dfe3ee;
}

.namebox {
    display: flex;
    align-items: center;
    width: 160px;
    background: #fff;
    border: 1px solid #a0a5ac;
    border-width: 1px 0;
}

.namebox input {
    flex: 1;
    min-width: 0;
    padding-right: 5px;
    text-align: center;
    font-size: 12px;
    color: #222;
}

.namebox .caret {
    margin: 0 6px 0 0;
    border-width: 4px 4px 0;
}

.fx {
    display: flex;
    align-items: center;
    justify-content: space-between;
    width: 85px;
    padding: 0 6px 0 5px;
    background: #dfe2e7;
    border: 1px solid #a0a5ac;
    border-radius: 10px 0 0 10px;
}

.fx button {
    font-family: "Liberation Serif", serif;
    font-weight: bold;
    font-style: italic;
    font-size: 15px;
    line-height: 18px;
    color: #333;
}

.fx small {
    font-size: 11px;
    padding-top: 4px;
}

.knob {
    width: 8px;
    height: 8px;
    border-radius: 50%;
    background: linear-gradient(#b5b9be, #eceef0);
}

.entry {
    flex: 1;
    min-width: 0;
    background: #fff;
    border: 1px solid #a0a5ac;
    border-width: 1px 0;
}

.expand {
    width: 16px;
    border: 1px solid #a0a5ac;
    background: #dfe2e7;
}

/* worksheet */
.sheet {
    display: flex;
    flex: 1;
    min-height: 0;
}

.viewport {
    position: relative;
    flex: 1;
    min-width: 0;
    overflow: hidden;
    background: #fff;
}

table {
    table-layout: fixed;
    border-collapse: separate;
    border-spacing: 0;
    font-family: Lato, sans-serif;
    font-size: 13px;
    line-height: 16px;
}

th, td {
    height: 20px;
    padding: 1px 0 0 1px;
    text-align: center;
    white-space: nowrap;
    color: #000;
    border: 0 solid #dadbdc;
    border-width: 0 1px 1px 0;
}

.tall th, .tall td {
    height: 21px;
}

th {
    font-weight: normal;
    color: #3b3b3b;
    background: #dfe2e7;
    border-color: #b0b4ba;
}

th.hot {
    background: linear-gradient(#fdd15c, #ffe870);
    border-color: #c28a30;
}

tbody th.hot {
    background: #ffd75f;
}

.corner::after {
    content: "";
    display: block;
    width: 11px;
    height: 11px;
    margin: 1px 3px 0 auto;
    background: linear-gradient(135deg, #dfe2e7 50%, #b9bec5 50%);
}

td.title {
    font-weight: bold;
    border-bottom: 2px solid #000;
}

td.thin-r {
    border-right: 1px solid #000;
}

/* the grey line is a background here, so that it does not notch the black border */
td.thick-r {
    padding: 0 0 1px 2px;
    border-right: 2px solid #000;
    border-bottom: 0;
    background: linear-gradient(#dadbdc, #dadbdc) bottom / 100% 1px no-repeat;
}

td.thick-b {
    padding-bottom: 0;
    border-bottom: 2px solid #000;
    background: none;
}

td.heading {
    font-size: 14px;
}

.selected {
    position: relative;
}

.selected::before {
    content: "";
    position: absolute;
    inset: -2px -2px;
    border: 2px solid #000;
}

.selected::after {
    content: "";
    position: absolute;
    right: -3px;
    bottom: -3px;
    width: 5px;
    height: 5px;
    background: #000;
    border: 1px solid #fff;
    border-width: 1px 0 0 1px;
}

.watermark {
    position: absolute;
    left: 35px;
    top: 249px;
    font-family: "Roboto Condensed", Roboto, sans-serif;
    font-weight: 500;
    font-size: 37px;
    line-height: 46px;
    color: #4da6ff;
}

.vscroll {
    display: flex;
    flex-direction: column;
    width: 20px;
    padding-right: 3px;
    border-left: 1px solid #b0b4ba;
    background: linear-gradient(90deg, #dde1e8 16px, #868b94 16px, #868b94 17px, #e6e9f0 17px);
}

.vscroll .split {
    height: 8px;
    width: 15px;
    border: 1px solid #868b94;
    background: linear-gradient(#fff 2px, #777 2px, #777 3px, #fff 3px);
}

.vscroll button {
    height: 17px;
    width: 15px;
}

.thumb {
    display: flex;
    align-items: center;
    justify-content: center;
    border: 1px solid #868b94;
    border-radius: 2px;
    background: linear-gradient(#f8f9fb, #dfe3e9);
}

.vscroll .thumb {
    width: 15px;
    flex: 1;
    margin-bottom: 20px;
    background: linear-gradient(90deg, #f8f9fb, #dfe3e9);
}

/* sheet tabs */
.sheetbar {
    display: flex;
    height: 16px;
    flex: none;
    background: #dce0e8;
    border-top: 1px solid #a9aeb5;
    border-bottom: 1px solid #868b94;
}

.sheetbar svg.edge {
    height: 14px;
    overflow: hidden;
}

.nav {
    display: flex;
    align-items: center;
    width: 63px;
    padding-left: 5px;
    gap: 7px;
    border-right: 1px solid #a9aeb5;
}

.stab {
    padding-left: 9px;
    font-size: 12px;
    line-height: 14px;
    color: #555a61;
}

.stab.current {
    padding-right: 1px;
    font-weight: bold;
    background: #fff;
}

.stab.new {
    width: 28px;
}

.edge {
    margin-right: -3px;
}

.hscroll {
    display: flex;
    width: 538px;
    margin-left: auto;
    margin-right: 20px;
}

.hscroll button {
    width: 17px;
}

.grip {
    width: 8px;
    border: 1px solid #868b94;
    background: linear-gradient(90deg, #fff 2px, #868b94 2px, #868b94 3px, #fff 3px);
}

.track {
    display: flex;
    flex: 1;
    padding-right: 25px;
}

.track .thumb {
    flex: 1;
}

/* status bar */
.status {
    display: flex;
    align-items: center;
    height: 22px;
    flex: none;
    background: linear-gradient(#d9dce0, #bcc1c8);
}

.ready {
    width: 48px;
    padding-left: 8px;
    line-height: 12px;
}

.div {
    width: 1px;
    height: 18px;
    background: #8d9299;
}

.macro {
    width: 35px;
}

.right {
    display: flex;
    align-items: center;
    margin-left: auto;
    padding-right: 4px;
}

.view {
    width: 19px;
    height: 19px;
}

.view.on {
    margin-left: 4px;
    margin-right: 1px;
    border: 1px solid #c0862c;
    border-radius: 2px;
    background: #ffdc70;
}

.pct {
    padding: 0 8px;
    font-size: 12px;
    line-height: 12px;
}

.status input {
    appearance: none;
    width: 100px;
    height: 16px;
    background: linear-gradient(transparent 7px, #8d9299 7px, #8d9299 8px, transparent 8px);
}

.status input::-webkit-slider-thumb {
    appearance: none;
    width: 9px;
    height: 12px;
    border: 1px solid #6f757d;
    border-radius: 1px 1px 4px 4px;
    background: #f6f7f9;
}
```
